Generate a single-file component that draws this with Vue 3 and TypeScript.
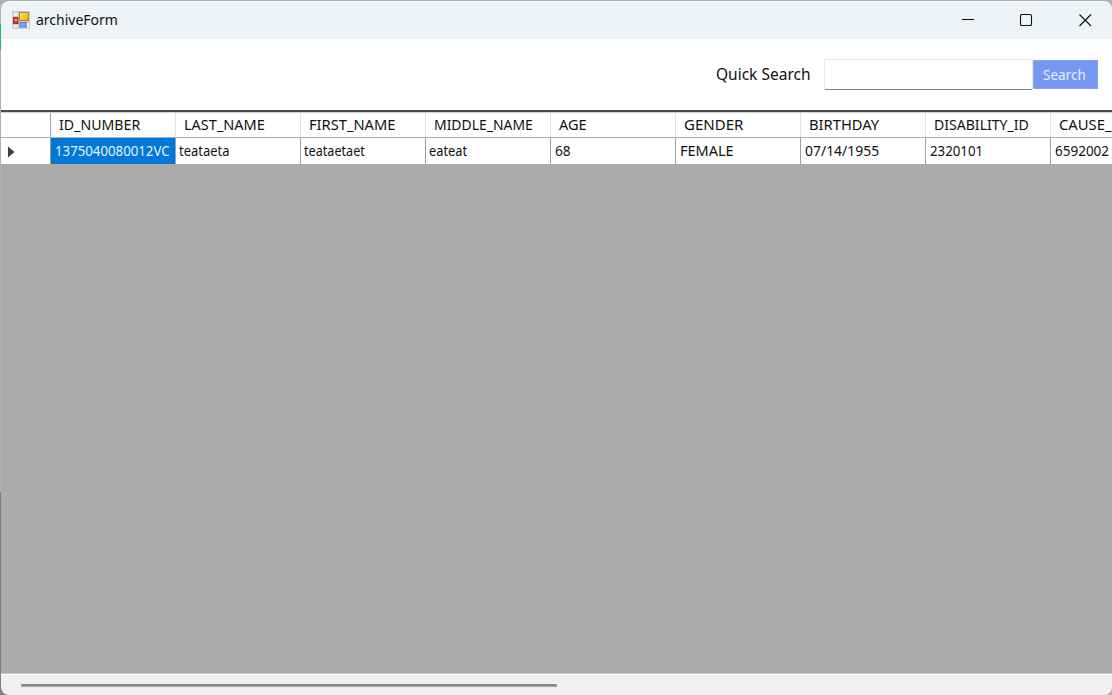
<script setup lang="ts">
interface Column {
  title: string
  titleWidth: number
  value: string
  valueWidth: number
}

const columns: Column[] = [
  { title: 'ID_NUMBER', titleWidth: 81, value: '1375040080012VC', valueWidth: 115 },
  { title: 'LAST_NAME', titleWidth: 81, value: 'teataeta', valueWidth: 50 },
  { title: 'FIRST_NAME', titleWidth: 86, value: 'teataetaet', valueWidth: 61 },
  { title: 'MIDDLE_NAME', titleWidth: 99, value: 'eateat', valueWidth: 38 },
  { title: 'AGE', titleWidth: 28, value: '68', valueWidth: 16 },
  { title: 'GENDER', titleWidth: 59, value: 'FEMALE', valueWidth: 54 },
  { title: 'BIRTHDAY', titleWidth: 70, value: '07/14/1955', valueWidth: 74 },
  { title: 'DISABILITY_ID', titleWidth: 95, value: '2320101', valueWidth: 53 },
  { title: 'CAUSE_', titleWidth: 53, value: '6592002', valueWidth: 54 },
]

// Condenses a label horizontally so that it takes the given width.
const vFit = (el: HTMLElement, binding: { value: number }) => {
  requestAnimationFrame(() => {
    el.style.transform = `scaleX(${binding.value / el.offsetWidth})`
  })
}
</script>

<template>
  <div class="desktop">
    <div class="behind"></div>
    <div class="behind lower"></div>
    <div class="window">
      <header class="titlebar">
        <svg class="app-icon" width="18" height="18" viewBox="0 0 18 18">
          <defs>
            <linearGradient id="gold" x1="0" y1="0" x2="1" y2="1">
              <stop offset="0" stop-color="#ffe680" /><stop offset="1" stop-color="#e9a800" />
            </linearGradient>
          </defs>
          <rect width="18" height="18" fill="#c9cdd1" />
          <rect x="1.5" y="1.5" width="4" height="3.5" fill="#edf0f3" />
          <rect x="1.5" y="14" width="4" height="2.5" fill="#edf0f3" />
          <rect x="15" y="12" width="2" height="5" fill="#edf0f3" />
          <rect x="7.5" y="1.5" width="9" height="8" fill="url(#gold)" stroke="#b98a1d" />
          <rect x="1.5" y="6.5" width="4.5" height="6" fill="#cf3b30" stroke="#b02a22" />
          <rect x="3" y="8" width="2" height="2" fill="#f2a59c" />
          <rect x="8" y="11.5" width="6" height="4.5" fill="#70a5f4" stroke="#4a82dc" />
        </svg>
        <span v-fit="82" class="text caption">archiveForm</span>
        <svg class="controls" width="150" height="38" viewBox="0 0 150 38" fill="none" stroke="#111" stroke-width="1.1">
          <path d="M0 18.5h12" />
          <rect x="58.5" y="13.5" width="11" height="11" rx="1.3" />
          <path d="M117.5 13.5l11.5 11.5M129 13.5l-11.5 11.5" />
        </svg>
      </header>
      <section class="toolbar">
        <label class="label" for="quick"><span v-fit="95" class="text">Quick Search</span></label>
        <input id="quick" class="field" type="text" />
        <button class="search"><span v-fit="43" class="text">Search</span></button>
      </section>
      <main class="grid">
        <div class="row head">
          <div class="rowhead"></div>
          <div v-for="c in columns" :key="c.title" class="cell">
            <span v-fit="c.titleWidth" class="text">{{ c.title }}</span>
          </div>
        </div>
        <div class="row data">
          <div class="rowhead">
            <svg width="7" height="12" viewBox="0 0 7 12"><path d="M0 0.5L6.5 6L0 11.5z" fill="#404040" /></svg>
          </div>
          <div v-for="(c, i) in columns" :key="c.title" class="cell" :class="{ selected: i === 0, digits: i > 3 }">
            <span v-fit="c.valueWidth" class="text">{{ c.value }}</span>
          </div>
        </div>
      </main>
      <footer class="scrollbar"><div class="thumb"></div></footer>
    </div>
  </div>
</template>

<style>
body { overflow: hidden; }
</style>

<style scoped>
* { box-sizing: border-box; }
.desktop {
  position: relative;
  width: 1112px;
  height: 695px;
  overflow: hidden;
  background: #b0b0b0;
  font-family: "Noto Sans", "Open Sans", sans-serif;
  color: #111;
}
.behind {
  position: absolute;
  left: 0;
  top: 24px;
  width: 1px;
  height: 26px;
  background: #22b573;
}
.lower { top: 492px; height: 203px; width: 8px; background: #808080; }
.window {
  position: relative;
  width: 1112px;
  height: 695px;
  display: flex;
  flex-direction: column;
  padding: 1px 0 0 1px;
  overflow: hidden;
}
.text {
  display: inline-block;
  flex: none;
  white-space: nowrap;
  transform-origin: 0 50%;
}
.titlebar {
  height: 38px;
  flex: none;
  display: flex;
  align-items: center;
  padding-left: 11px;
  background: #eef3f8;
  border-radius: 8px 8px 0 0;
}
.app-icon { flex: none; }
.caption { margin-left: 6px; padding-bottom: 2px; font-size: 14.5px; }
.controls { margin-left: auto; flex: none; }
.toolbar {
  height: 71px;
  flex: none;
  display: flex;
  align-items: flex-start;
  padding: 20px 0 0 715px;
  background: #fff;
}
.label { width: 108px; height: 30px; line-height: 31px; font-size: 15.5px; flex: none; }
.field {
  width: 209px;
  height: 31px;
  border: 1px solid #e8e8e8;
  border-bottom-color: #858585;
  border-radius: 2px;
  background: #fff;
  outline: none;
  flex: none;
}
.search {
  width: 65px;
  height: 29px;
  margin-top: 1px;
  padding: 0 0 0 9px;
  border: 1px solid #85a3f2;
  background: #7598f2;
  color: #e8eeff;
  font-family: inherit;
  font-size: 13.5px;
  text-align: left;
  line-height: 28px;
  flex: none;
}
.grid {
  flex: 1;
  min-height: 0;
  overflow: hidden;
  background: #ababab;
  border-top: 2px solid #484848;
  border-bottom: 1px solid #c4c4c4;
}
.row { display: flex; width: 1175px; background: #fff; font-size: 14.5px; }
.row .text { padding-bottom: 2px; }
.head { height: 26px; border-top: 1px solid #cfcfcf; border-bottom: 1px solid #b0b0b0; }
.data { height: 26px; }
.rowhead { width: 50px; flex: none; display: flex; align-items: center; padding-left: 7px; border-right: 1px solid #a0a0a0; }
.data .rowhead { padding-top: 2px; }
.cell { width: 125px; flex: none; display: flex; align-items: center; border-right: 1px solid #a0a0a0; }
.head .cell { padding-left: 8px; border-right-color: #e3e3e3; }
.data .cell { padding-left: 3px; }
.data .digits { padding-left: 4px; }
.data .selected { padding-left: 4px; background: #0078d7; color: #e7f3ff; }
.scrollbar {
  height: 21px;
  flex: none;
  padding: 9px 0 0 20px;
  border-top: 1px solid #fff;
  background: #f0f0f0;
  border-radius: 0 0 8px 8px;
}
.thumb { width: 536px; height: 3px; border-radius: 1px; background: #888; border: solid #a5a8a5; border-width: 0 0 1px; }
</style>
